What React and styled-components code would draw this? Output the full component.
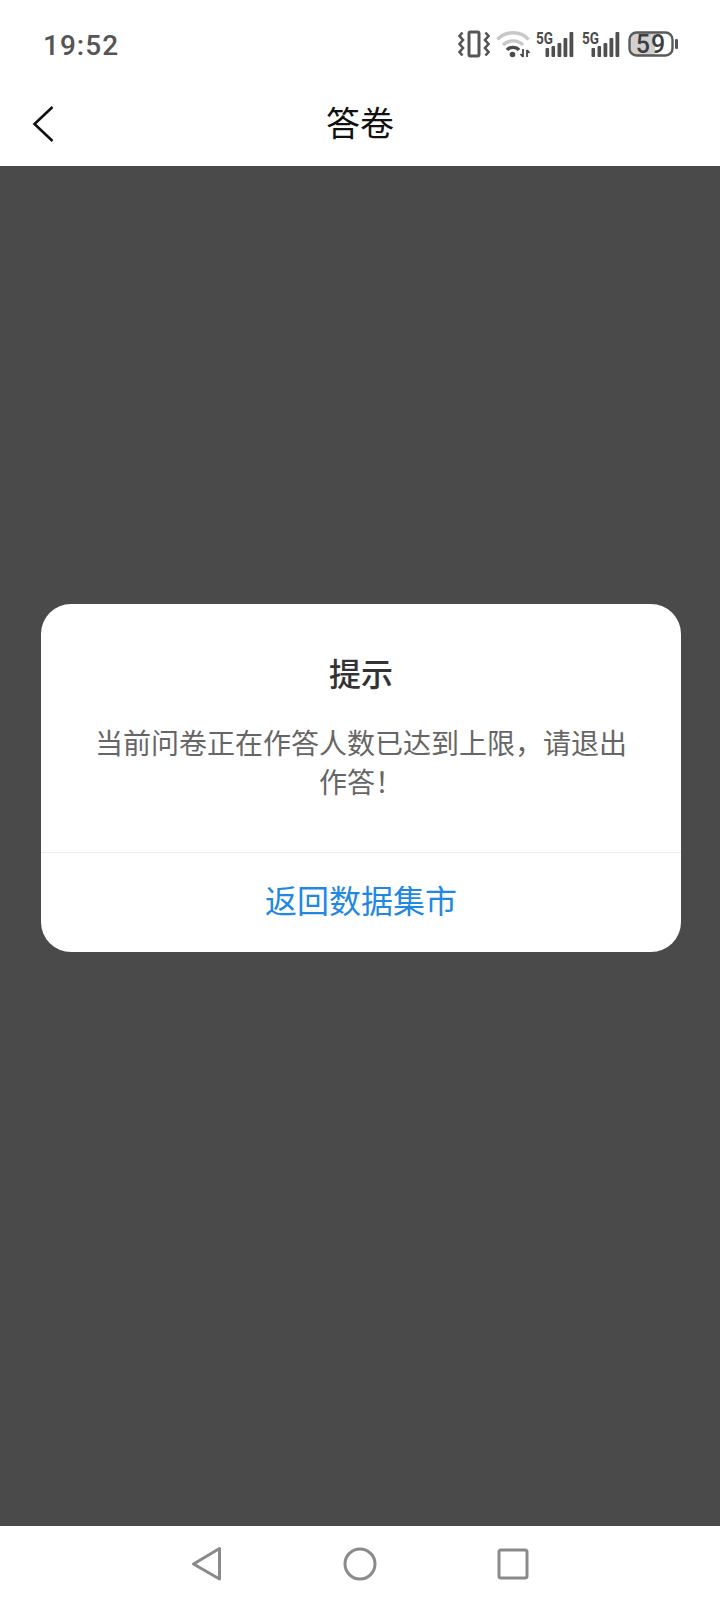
import React from "react";
import styled, { createGlobalStyle } from "styled-components";

const GlobalStyle = createGlobalStyle`
    html, body {
        margin: 0;
        padding: 0;
        background: #ffffff;
    }
    * {
        box-sizing: border-box;
    }
`;

const FONT = `"Noto Sans CJK SC", "Noto Sans", sans-serif`;

const Page = styled.div`
    width: 720px;
    height: 1604px;
    display: flex;
    flex-direction: column;
    font-family: ${FONT};
    background: #ffffff;
`;

const StatusBar = styled.div`
    height: 88px;
    flex: none;
    display: flex;
    align-items: center;
    justify-content: space-between;
    padding: 0 42px 0 43px;
`;

const Time = styled.div`
    font-family: "Roboto", sans-serif;
    font-size: 28px;
    font-weight: 500;
    letter-spacing: 1px;
    color: #555555;
    line-height: 1;
    margin-top: 3px;
`;

const StatusIcons = styled.div`
    display: flex;
    align-items: center;
    gap: 6px;
`;

const Header = styled.div`
    height: 78px;
    flex: none;
    display: flex;
    align-items: center;
    justify-content: center;
    position: relative;
`;

const BackButton = styled.div`
    position: absolute;
    left: 32px;
    top: 17px;
    width: 24px;
    height: 38px;
`;

const HeaderTitle = styled.div`
    font-size: 34px;
    color: #111111;
    line-height: 1;
    margin-top: -11px;
`;

const Overlay = styled.div`
    flex: 1;
    background: #4a4a4a;
    padding: 438px 39px 0 41px;
`;

const Dialog = styled.div`
    background: #ffffff;
    border-radius: 30px;
    height: 348px;
    display: flex;
    flex-direction: column;
    overflow: hidden;
`;

const DialogBody = styled.div`
    height: 248px;
    flex: none;
    padding: 47px 48px 0;
    text-align: center;
`;

const DialogTitle = styled.div`
    font-size: 32px;
    font-weight: 500;
    color: #333333;
    line-height: 42px;
`;

const DialogText = styled.div`
    margin-top: 30px;
    font-size: 28px;
    color: #666666;
    line-height: 39px;
`;

const DialogAction = styled.div`
    flex: 1;
    border-top: 1px solid #ececec;
    display: flex;
    align-items: center;
    justify-content: center;
    font-size: 32px;
    color: #1f88e5;
    padding-bottom: 8px;
`;

const NavBar = styled.div`
    height: 78px;
    flex: none;
    display: flex;
    align-items: center;
    justify-content: center;
    gap: 120px;
    padding-bottom: 2px;
`;

const VibrateIcon = () => (
    <svg width="32" height="28" viewBox="0 0 32 28" fill="none" stroke="#555555">
        <rect x="11" y="2" width="10" height="24" rx="1.5" strokeWidth="3" />
        <path d="M4.5 2.5 L1.5 6 L5 10 L1.5 14 L5 18 L1.5 22 L4.5 25.5" strokeWidth="2.6" />
        <path d="M27.5 2.5 L30.5 6 L27 10 L30.5 14 L27 18 L30.5 22 L27.5 25.5" strokeWidth="2.6" />
    </svg>
);

const WifiIcon = () => (
    <svg width="34" height="28" viewBox="0 0 34 28" fill="none">
        <path d="M1.5 9.5 C9 0.5 25 0.5 32.5 9.5" stroke="#c8c8c8" strokeWidth="3.4" />
        <path d="M7 15 C12 9.5 22 9.5 27 15" stroke="#c8c8c8" strokeWidth="3.4" />
        <path d="M11 20 C14 16.5 20 16.5 23 20" stroke="#4a4a4a" strokeWidth="3.4" />
        <circle cx="16.5" cy="24.5" r="2.8" fill="#4a4a4a" />
        <path d="M27 19 L27 27 M24.5 24 L27 27 M31 20 L31 27 M31 20 L33.5 23" stroke="#4a4a4a" strokeWidth="1.8" />
    </svg>
);

const SignalIcon = () => (
    <svg width="40" height="36" viewBox="0 -4 40 36">
        <text x="0" y="14" fontFamily="Roboto, sans-serif" fontSize="17" fontWeight="700" fill="#4a4a4a" textLength="17" lengthAdjust="spacingAndGlyphs">5G</text>
        <rect x="9.5" y="18" width="3.6" height="9" rx="1" fill="#4f4f4f" />
        <rect x="15.5" y="16" width="3.6" height="11" rx="1" fill="#4f4f4f" />
        <rect x="21.5" y="13" width="3.8" height="14" rx="1" fill="#4f4f4f" />
        <rect x="27.5" y="8" width="3.8" height="19" rx="1" fill="#4f4f4f" />
        <rect x="33.5" y="2" width="3.8" height="25" rx="1" fill="#4f4f4f" />
    </svg>
);

const BatteryIcon = () => (
    <svg width="50" height="26" viewBox="0 0 50 26">
        <rect x="1.5" y="1.5" width="43" height="23" rx="7" fill="#ffffff" />
        <path d="M7 2 H27 V24 H7 Q2 24 2 19 V7 Q2 2 7 2 Z" fill="#d0d0d0" />
        <rect x="1.5" y="1.5" width="43" height="23" rx="7" fill="none" stroke="#5a5a5a" strokeWidth="2.4" />
        <text x="23" y="21.5" textAnchor="middle" fontFamily="Roboto, sans-serif" fontSize="25" fontWeight="500" fill="#3f3f3f" letterSpacing="1">59</text>
        <rect x="47" y="8" width="3" height="10" rx="1.2" fill="#555555" />
    </svg>
);

const ChevronIcon = () => (
    <svg width="24" height="38" viewBox="0 0 24 38" fill="none">
        <path d="M20.5 2 L2.5 19 L20.5 36" stroke="#111111" strokeWidth="2.6" />
    </svg>
);

const NavBackIcon = () => (
    <svg width="32" height="36" viewBox="0 0 32 36" fill="none">
        <path d="M28.5 2.5 L28.5 33 L2.5 18 Z" stroke="#8a8a8a" strokeWidth="3" strokeLinejoin="round" />
    </svg>
);

const NavHomeIcon = () => (
    <svg width="34" height="34" viewBox="0 0 34 34" fill="none">
        <circle cx="17" cy="17" r="15" stroke="#8a8a8a" strokeWidth="3" />
    </svg>
);

const NavRecentIcon = () => (
    <svg width="32" height="32" viewBox="0 0 32 32" fill="none">
        <rect x="2" y="2" width="28" height="28" rx="2" stroke="#8a8a8a" strokeWidth="3" />
    </svg>
);

function App() {
    return (
        <Page>
            <GlobalStyle />
            <StatusBar>
                <Time>19:52</Time>
                <StatusIcons>
                    <VibrateIcon />
                    <WifiIcon />
                    <SignalIcon />
                    <SignalIcon />
                    <BatteryIcon />
                </StatusIcons>
            </StatusBar>
            <Header>
                <BackButton>
                    <ChevronIcon />
                </BackButton>
                <HeaderTitle>答卷</HeaderTitle>
            </Header>
            <Overlay>
                <Dialog>
                    <DialogBody>
                        <DialogTitle>提示</DialogTitle>
                        <DialogText>当前问卷正在作答人数已达到上限，请退出作答！</DialogText>
                    </DialogBody>
                    <DialogAction>返回数据集市</DialogAction>
                </Dialog>
            </Overlay>
            <NavBar>
                <NavBackIcon />
                <NavHomeIcon />
                <NavRecentIcon />
            </NavBar>
        </Page>
    );
}

export default App;
